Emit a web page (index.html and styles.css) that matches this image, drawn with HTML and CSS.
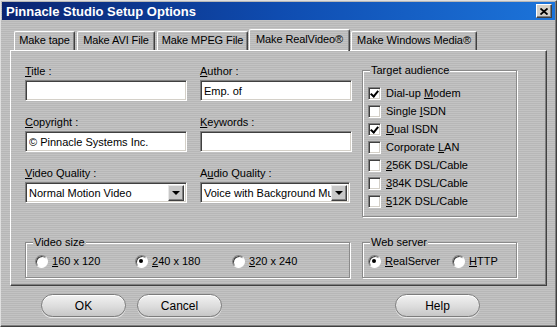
FILE: index.html
```html
<!DOCTYPE html>
<html lang="en">
<head>
    <meta charset="UTF-8">
    <meta name="viewport" content="width=device-width, initial-scale=1.0">
    <title>Pinnacle Studio Setup Options</title>
    <link rel="stylesheet" href="styles.css">
</head>
<body>
    <div class="window">
        <div class="titlebar">
            <span class="title">Pinnacle Studio Setup Options</span>
            <span class="close-btn">
                <svg width="8" height="7" viewBox="0 0 8 7"><path d="M0.5 0.5 L7.5 6.5 M7.5 0.5 L0.5 6.5" stroke="#000" stroke-width="1.8"/></svg>
            </span>
        </div>

        <div class="tabs">
            <div class="tab t1">Make tape</div>
            <div class="tab t2">Make AVI File</div>
            <div class="tab t3">Make MPEG File</div>
            <div class="tab t4 active">Make RealVideo®</div>
            <div class="tab t5">Make Windows Media®</div>
        </div>

        <div class="panel">
            <div class="fields">
                <div class="field">
                    <label><u>T</u>itle :</label>
                    <input type="text" value="">
                </div>
                <div class="field">
                    <label><u>A</u>uthor :</label>
                    <input type="text" value="Emp. of">
                </div>
                <div class="field">
                    <label><u>C</u>opyright :</label>
                    <input type="text" value="© Pinnacle Systems Inc.">
                </div>
                <div class="field">
                    <label><u>K</u>eywords :</label>
                    <input type="text" value="">
                </div>
                <div class="field">
                    <label><u>V</u>ideo Quality :</label>
                    <div class="combo">
                        <span class="combo-text">Normal Motion Video</span>
                        <span class="combo-btn"><span class="arrow"></span></span>
                    </div>
                </div>
                <div class="field">
                    <label>A<u>u</u>dio Quality :</label>
                    <div class="combo">
                        <span class="combo-text">Voice with Background Music</span>
                        <span class="combo-btn"><span class="arrow"></span></span>
                    </div>
                </div>
            </div>

            <div class="group audience">
                <span class="group-title">Target audience</span>
                <div class="check-row"><span class="checkbox checked"></span><span>Dial-up <u>M</u>odem</span></div>
                <div class="check-row"><span class="checkbox"></span><span>Single <u>I</u>SDN</span></div>
                <div class="check-row"><span class="checkbox checked"></span><span><u>D</u>ual ISDN</span></div>
                <div class="check-row"><span class="checkbox"></span><span>Corporate <u>L</u>AN</span></div>
                <div class="check-row"><span class="checkbox"></span><span><u>2</u>56K DSL/Cable</span></div>
                <div class="check-row"><span class="checkbox"></span><span><u>3</u>84K DSL/Cable</span></div>
                <div class="check-row"><span class="checkbox"></span><span><u>5</u>12K DSL/Cable</span></div>
            </div>

            <div class="group video-size">
                <span class="group-title">Video size</span>
                <div class="radio-row">
                    <div class="radio-item w100"><span class="radio"></span><span><u>1</u>60 x 120</span></div>
                    <div class="radio-item w97"><span class="radio checked"></span><span><u>2</u>40 x 180</span></div>
                    <div class="radio-item"><span class="radio"></span><span><u>3</u>20 x 240</span></div>
                </div>
            </div>

            <div class="group web-server">
                <span class="group-title">Web server</span>
                <div class="radio-row">
                    <div class="radio-item w84"><span class="radio checked"></span><span><u>R</u>ealServer</span></div>
                    <div class="radio-item"><span class="radio"></span><span><u>H</u>TTP</span></div>
                </div>
            </div>
        </div>

        <div class="footer">
            <button class="btn">OK</button>
            <button class="btn">Cancel</button>
            <button class="btn help">Help</button>
        </div>
    </div>
</body>
</html>
```

FILE: styles.css
```css
* { box-sizing: border-box; }
body { margin: 0; font-family: "Liberation Sans", Arial, sans-serif; font-size: 11px; color: #000; background: #bcbcbc; }

.window, .group-title {
    background: repeating-linear-gradient(to bottom, #c3c3c3 0 1px, #b7b7b7 1px 2px);
    background-attachment: fixed;
}
.window {
    width: 557px; height: 327px; padding: 1px;
    border: 1px solid; border-color: #e0e0e0 #404040 #404040 #e0e0e0;
    box-shadow: inset -1px -1px 0 #808080;
}

.titlebar {
    height: 18px; display: flex; align-items: center; justify-content: space-between;
    padding: 0 3px 0 4px;
    background: linear-gradient(to right, #0a2470, #0f4cb0 50%, #1c74da);
}
.title { color: #fff; font-weight: bold; font-size: 13px; }
.close-btn {
    width: 16px; height: 14px; display: flex; align-items: center; justify-content: center;
    background: #d4d0c8; border: 1px solid; border-color: #fff #404040 #404040 #fff;
    box-shadow: inset -1px -1px 0 #808080;
}

.tabs { display: flex; align-items: flex-end; height: 21px; margin: 9px 0 0 12px; position: relative; z-index: 1; }
.tab {
    height: 19px; line-height: 17px; margin-right: 2px; text-align: center;
    border: 1px solid; border-bottom: none; border-color: #fff #404040 #404040 #fff;
    border-radius: 2px 2px 0 0; box-shadow: inset -1px 0 0 #808080;
    white-space: nowrap; letter-spacing: -0.1px;
}
.t1 { width: 61px; }
.t2 { width: 78px; }
.t3 { width: 91px; }
.t4 { width: 101px; }
.t5 { width: 126px; }
.tab.active { height: 22px; margin-bottom: -1px; line-height: 18px; margin-left: -1px; margin-right: 1px; }

.panel {
    margin: 0 8px; height: 236px; padding: 13px 0 0 14px;
    border: 1px solid; border-color: #fff #404040 #404040 #fff;
    box-shadow: inset -1px -1px 0 #808080;
    display: grid; grid-template-columns: 327px 155px; column-gap: 10px; row-gap: 18px;
    align-items: start;
}

.fields { display: grid; grid-template-columns: 162px 152px; column-gap: 13px; }
.field { height: 51px; }
.field:nth-child(5), .field:nth-child(6) { height: 38px; }
.field:nth-child(6) .combo { width: 150px; }
label { display: block; line-height: 14px; margin-bottom: 2px; }

input, .combo {
    width: 100%; height: 21px; font: inherit; color: #000; background: #fff; padding: 0 2px;
    border: 1px solid; border-color: #808080 #fff #fff #808080;
    box-shadow: inset 1px 1px 0 #404040, inset -1px -1px 0 #d4d0c8;
    outline: none;
}
input { padding-left: 3px; }
.combo { display: flex; align-items: center; padding: 2px; overflow: hidden; }
.combo-text { flex: 1; white-space: nowrap; overflow: hidden; padding-left: 1px; }
.combo-btn {
    width: 16px; height: 16px; flex: none; display: flex; align-items: center; justify-content: center;
    background: #c8c8c8; border: 1px solid; border-color: #e8e8e8 #404040 #404040 #e8e8e8;
    box-shadow: inset -1px -1px 0 #808080;
}
.arrow { width: 0; height: 0; border-left: 4px solid transparent; border-right: 4px solid transparent; border-top: 4px solid #000; margin-top: 1px; }

.group {
    position: relative; border: 1px solid #8a8a8a;
    box-shadow: 1px 1px 0 #fff, inset 1px 1px 0 #fff;
}
.group-title { position: absolute; top: -7px; left: 7px; padding: 0 1px; line-height: 13px; }
.audience { margin-top: 6px; height: 147px; padding: 13px 0 0 5px; }
.check-row { height: 18px; display: flex; align-items: center; }
.checkbox {
    width: 13px; height: 13px; margin-right: 5px; background: #fff; position: relative;
    border: 1px solid; border-color: #808080 #fff #fff #808080;
    box-shadow: inset 1px 1px 0 #404040, inset -1px -1px 0 #d4d0c8;
}
.checkbox.checked::after {
    content: ""; position: absolute; left: 3px; top: 1px; width: 3px; height: 6px;
    border: solid #000; border-width: 0 2px 2px 0; transform: rotate(40deg);
}

.video-size, .web-server { height: 36px; padding: 11px 0 0 9px; }
.video-size { width: 325px; }
.web-server { padding-left: 5px; }
.radio-row { display: flex; }
.radio-item { display: flex; align-items: center; height: 14px; }
.w100 { width: 100px; }
.w97 { width: 97px; }
.w84 { width: 84px; }
.radio {
    width: 13px; height: 13px; border-radius: 50%; margin-right: 4px; background: #fff; position: relative;
    border: 1px solid; border-color: #808080 #fff #fff #808080;
    box-shadow: inset 1px 1px 0 #404040;
}
.radio.checked::after {
    content: ""; position: absolute; left: 3px; top: 3px; width: 4px; height: 4px; border-radius: 50%; background: #000;
}

.footer { display: flex; gap: 11px; padding: 8px 75px 0 39px; }
.btn {
    width: 85px; height: 23px; border-radius: 12px; font: inherit; font-size: 12px; color: #000;
    border: 1px solid #7c7c7c; background: linear-gradient(#f2f2f2, #dcdcdc 55%, #c6c6c6);
    box-shadow: inset 0 1px 0 #fff, 0 1px 0 #e8e8e8;
}
.help { margin-left: auto; }
```
